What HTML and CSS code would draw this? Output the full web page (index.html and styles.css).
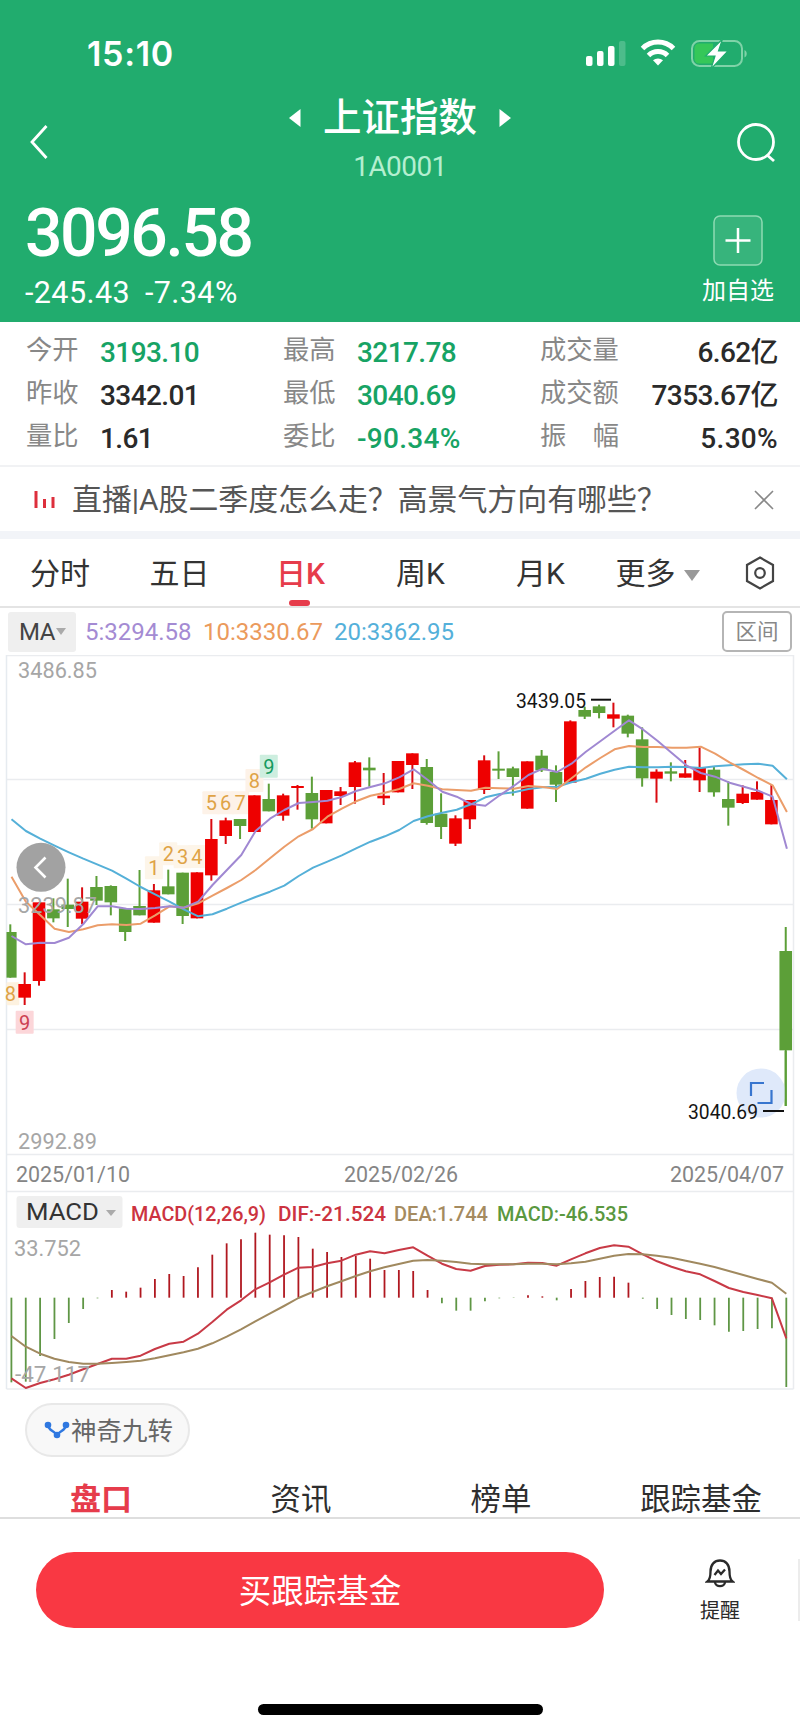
FILE: index.html
```html
<!DOCTYPE html>
<html lang="zh-CN">
<head>
    <meta charset="UTF-8">
    <meta name="viewport" content="width=device-width, initial-scale=1.0">
    <title>上证指数</title>
    <link rel="stylesheet" href="styles.css">
</head>
<body>
    <div class="app">
        <header class="header">
            <div class="status-bar">
                <span class="time">15:10</span>
                <svg class="status-icons" width="164" height="30" viewBox="0 0 164 30">
                    <rect x="1" y="17" width="6.5" height="10" rx="2" fill="#fff"/>
                    <rect x="12" y="12" width="6.5" height="15" rx="2" fill="#fff"/>
                    <rect x="23" y="7" width="6.5" height="20" rx="2" fill="#fff"/>
                    <rect x="34" y="2" width="6.5" height="25" rx="2" fill="#fff" opacity=".2"/>
                    <g fill="none" stroke="#fff" stroke-width="5">
                        <path d="M57.500 9.500a22 22 0 0 1 31 0"/>
                        <path d="M63.500 16.500a13.500 13.500 0 0 1 19 0"/>
                    </g>
                    <path d="M73 26.500l-5-5.200a7.500 7.500 0 0 1 10 0z" fill="#fff"/>
                    <rect x="107" y="2" width="50" height="25" rx="7.500" fill="none" stroke="#7fd3a8" stroke-width="2"/>
                    <path d="M114 4.500h14v20h-14a4.500 4.500 0 0 1-4.500-4.500V9a4.500 4.500 0 0 1 4.500-4.500z" fill="#35c759"/>
                    <path d="M159.500 11c3 1.500 3 6 0 7.500z" fill="#7fd3a8"/>
                    <path d="M137.500 0l-17 17h9.500l-4 13 17-18h-9.500z" fill="#fff" stroke="#21ac6e" stroke-width="1.200"/>
                </svg>
            </div>

            <div class="title-bar">
                <svg class="back" width="20" height="36" viewBox="0 0 20 36"><path d="M17.500 2L3 18l14.500 16"/></svg>
                <div class="title">
                    <div class="title-name">
                        <svg width="14" height="20" viewBox="0 0 14 20"><path d="M12.500 1v18L1 10z"/></svg>
                        <h1>上证指数</h1>
                        <svg width="14" height="20" viewBox="0 0 14 20"><path d="M1.500 1v18L13 10z"/></svg>
                    </div>
                    <p class="code">1A0001</p>
                </div>
                <svg class="search" width="42" height="44" viewBox="0 0 42 44"><circle cx="20" cy="20" r="17.500"/><path d="M31 33l7 6"/></svg>
            </div>

            <div class="quote">
                <div>
                    <div class="price">3096.58</div>
                    <div class="change"><span>-245.43</span><span>-7.34%</span></div>
                </div>
                <div class="add">
                    <svg width="50" height="51" viewBox="0 0 50 51">
                        <rect x="1" y="1" width="48" height="49" rx="6" fill="#fff" fill-opacity=".1" stroke="#8edab3" stroke-width="1.500"/>
                        <path d="M25 13v25M12.500 25.500h25" stroke="#fff" stroke-width="2.500"/>
                    </svg>
                    <span>加自选</span>
                </div>
            </div>
        </header>

        <section class="stats">
            <span class="label">今开</span><span class="value green">3193.10</span>
            <span class="label">最高</span><span class="value green">3217.78</span>
            <span class="label">成交量</span><span class="value right">6.62亿</span>
            <span class="label">昨收</span><span class="value">3342.01</span>
            <span class="label">最低</span><span class="value green">3040.69</span>
            <span class="label">成交额</span><span class="value right">7353.67亿</span>
            <span class="label">量比</span><span class="value">1.61</span>
            <span class="label">委比</span><span class="value green percent">-90.34%</span>
            <span class="label wide"><i>振</i><i>幅</i></span><span class="value right percent">5.30%</span>
        </section>

        <section class="news">
            <svg width="22" height="18" viewBox="0 0 22 18"><path d="M2 0v17M10.500 8v9M19 6v11" stroke="#dd2f3c" stroke-width="3"/></svg>
            <p>直播|A股二季度怎么走？高景气方向有哪些？</p>
            <svg class="close" width="20" height="20" viewBox="0 0 20 20"><path d="M1 1l18 18M19 1L1 19" stroke="#888" stroke-width="1.600"/></svg>
        </section>

        <nav class="periods">
            <span>分时</span>
            <span>五日</span>
            <span class="active">日K</span>
            <span>周K</span>
            <span>月K</span>
            <span class="more">更多 <svg width="16" height="11" viewBox="0 0 16 11"><path d="M0 0h16L8 11z" fill="#999"/></svg></span>
            <svg class="setting" width="30" height="34" viewBox="0 0 30 34">
                <path d="M15 1.500L28 9v16L15 32.500 2 25V9z"/><circle cx="15" cy="17" r="4.800"/>
            </svg>
        </nav>

        <section class="ma-bar">
            <span class="ma-select">MA<svg width="10" height="7" viewBox="0 0 10 7"><path d="M0 0h10L5 7z" fill="#aaa"/></svg></span>
            <span class="ma5">5:3294.58</span>
            <span class="ma10">10:3330.67</span>
            <span class="ma20">20:3362.95</span>
            <span class="range">区间</span>
        </section>

        <svg class="chart" id="chart" width="800" height="736" viewBox="0 0 800 736"></svg>

        <div class="tools">
            <span class="pill">
                <svg width="26" height="18" viewBox="0 0 26 18">
                    <path d="M4 4c1 6 5 5 9 10 4-5 8-4 9-10" fill="none" stroke="#2f78e0" stroke-width="2.500"/>
                    <circle cx="4" cy="4" r="3.300"/><circle cx="22" cy="4" r="3.300"/><circle cx="13" cy="14" r="3.300"/>
                </svg><b>神奇九转</b>
            </span>
        </div>

        <nav class="tabs">
            <span class="active">盘口</span>
            <span>资讯</span>
            <span>榜单</span>
            <span>跟踪基金</span>
        </nav>

        <footer class="footer">
            <div class="actions">
                <button class="buy">买跟踪基金</button>
                <div class="remind">
                    <svg width="30" height="30" viewBox="0 0 30 30">
                        <path d="M2.500 23.500c2.500-2 3-4 3-10C5.500 6.500 9.500 2.500 15 2.500s9.500 4 9.500 11c0 6 .5 8 3 10z"/>
                        <path d="M10 24c0 5.500 10 5.500 10 0M9.500 17l3.500-4.500 3 3.500 4-4.500"/>
                    </svg>
                    <span>提醒</span>
                </div>
                <i class="edge"></i>
            </div>
            <div class="home-bar"></div>
        </footer>
    </div>
    <script src="script.js"></script>
</body>
</html>
```
FILE: styles.css
```css
* {
    margin: 0;
    padding: 0;
    box-sizing: border-box;
}

body {
    width: 800px;
    background: #fff;
    color: #2a2a2a;
    font-family: Roboto, "Noto Sans CJK SC", sans-serif;
}

.app {
    width: 800px;
    height: 1731px;
    overflow: hidden;
}

/* Header */
.header {
    height: 322px;
    padding-top: 34px;
    background: #21ac6e;
    color: #fff;
}

.status-bar {
    display: flex;
    justify-content: space-between;
    align-items: center;
    height: 40px;
    padding: 0 51px 0 87px;
}

.time {
    font-family: Inter, sans-serif;
    font-size: 34px;
    font-weight: 600;
    line-height: 38px;
    letter-spacing: 0.7px;
}

.title-bar {
    display: flex;
    justify-content: space-between;
    height: 118px;
    padding: 19px 22px 0 29px;
}

.title-bar svg {
    fill: none;
    stroke: #fff;
    stroke-width: 2.8;
}

.back {
    margin-top: 31px;
}

.search {
    margin-top: 29px;
}

.title {
    width: 300px;
    margin-left: 15px;
    text-align: center;
}

.title-name {
    display: flex;
    justify-content: center;
    align-items: center;
    gap: 21px;
    height: 50px;
}

.title-name svg {
    fill: #fff;
    stroke: none;
}

.title-name h1 {
    font-size: 38.5px;
    font-weight: 500;
    line-height: 50px;
}

.code {
    margin-top: 8px;
    color: #b4efd0;
    font-size: 28px;
    line-height: 32px;
    letter-spacing: -0.6px;
}

.quote {
    display: flex;
    justify-content: space-between;
    padding: 6px 26px 0 25px;
}

.price {
    height: 70px;
    font-size: 66px;
    font-weight: 500;
    line-height: 71px;
    letter-spacing: -2.4px;
}

.change {
    display: flex;
    gap: 15px;
    margin-top: 6px;
    font-size: 30.5px;
    line-height: 38px;
    letter-spacing: 0.4px;
}

.add {
    display: flex;
    flex-direction: column;
    align-items: center;
    padding-top: 17px;
    font-size: 24px;
}

.add span {
    margin-top: 7px;
    line-height: 36px;
}

/* Quote numbers */
.stats {
    display: grid;
    grid-template-columns: 74px 183px 74px 183px 79px 1fr;
    grid-auto-rows: 43px;
    height: 145px;
    padding: 8px 22px 0 26px;
    border-bottom: 2px solid #f1f2f4;
}

.label {
    color: #888;
    font-size: 26.3px;
    line-height: 41px;
    white-space: nowrap;
}

.wide {
    display: flex;
    justify-content: space-between;
}

.label i {
    font-style: normal;
}

.value {
    font-size: 28px;
    font-weight: 500;
    line-height: 45px;
    letter-spacing: -0.6px;
    white-space: nowrap;
}

.percent {
    letter-spacing: 0.3px;
}

.green {
    color: #17a364;
}

.right {
    text-align: right;
}

/* News line */
.news {
    display: flex;
    align-items: center;
    height: 72px;
    padding: 2px 26px 0 34px;
    color: #555;
    border-bottom: 8px solid #f2f4f8;
}

.news p {
    flex: 1;
    margin-left: 16px;
    font-size: 29.9px;
    line-height: 44px;
}

/* Period tabs */
.periods {
    display: grid;
    grid-template-columns: 120px 119px 123px 117px 123px 112px 1fr;
    align-items: center;
    height: 69px;
    border-bottom: 2px solid #e4e4e4;
    color: #333;
    font-size: 30px;
    text-align: center;
}

.periods span {
    position: relative;
    height: 67px;
    line-height: 70px;
}

.periods .active {
    color: #e63c4b;
    font-weight: 500;
}

.periods .active::after {
    content: "";
    position: absolute;
    left: 50px;
    bottom: 0;
    width: 21px;
    height: 6px;
    border-radius: 3px;
    background: #e63c4b;
}

.periods .more {
    text-align: right;
    padding-right: 14px;
    white-space: nowrap;
}

.more svg {
    margin: 0 0 3px 1px;
}

.setting {
    margin-left: 31px;
    fill: none;
    stroke: #444;
    stroke-width: 2.2;
}

/* MA row */
.ma-bar {
    display: flex;
    align-items: center;
    height: 47px;
    padding: 0 8px;
    font-size: 24px;
}

.ma-select {
    display: flex;
    align-items: center;
    width: 68px;
    height: 40px;
    padding-left: 11px;
    border-radius: 3px;
    background: #efefef;
    color: #444;
    letter-spacing: -0.5px;
}

.ma-select svg {
    margin-left: 1px;
}

.ma5 {
    width: 118px;
    margin-left: 9px;
    color: #a48bd3;
}

.ma10 {
    width: 131px;
    color: #eb9a5c;
}

.ma20 {
    color: #54b0da;
}

.range {
    width: 70px;
    height: 41px;
    margin-left: auto;
    border: 2px solid #b5b5b5;
    border-radius: 5px;
    color: #888;
    font-size: 21.5px;
    line-height: 37px;
    text-align: center;
}

/* Chart */
.chart {
    display: block;
}

.chart text {
    font-family: Roboto, sans-serif;
}

.line {
    fill: none;
    stroke-width: 2;
    stroke-linejoin: round;
}

/* Tools and tabs under the chart */
.tools {
    display: flex;
    height: 85px;
    padding: 12px 25px 0;
}

.pill {
    display: flex;
    align-items: center;
    width: 165px;
    height: 54px;
    padding-left: 17px;
    border: 2px solid #e8e8e8;
    border-radius: 27px;
    background: #f8f8f8;
    color: #666;
    font-size: 25.5px;
    white-space: nowrap;
}

.pill svg {
    margin-right: 1px;
    fill: #2f78e0;
}

.pill b {
    padding-bottom: 4px;
    font-weight: 400;
}

.tabs {
    display: grid;
    grid-template-columns: repeat(4, 200px);
    height: 43px;
    padding-left: 1px;
    border-bottom: 2px solid #dedede;
    color: #2e2e2e;
    font-size: 30.4px;
    line-height: 47px;
    text-align: center;
}

.tabs .active {
    color: #e63c4b;
    font-weight: 700;
    font-size: 31px;
}

/* Bottom bar */
.footer {
    padding-top: 33px;
}

.actions {
    display: flex;
    height: 152px;
    padding-left: 36px;
}

.buy {
    width: 568px;
    height: 76px;
    padding-bottom: 4px;
    border: none;
    border-radius: 38px;
    background: #f93843;
    color: #fff;
    font-family: inherit;
    font-size: 32.5px;
}

.remind {
    display: flex;
    flex-direction: column;
    align-items: center;
    margin-left: 96px;
    padding-top: 6px;
    font-size: 20px;
    line-height: 30px;
}

.remind svg {
    margin-bottom: 8px;
    fill: none;
    stroke: #2a2a2a;
    stroke-width: 2.3;
}

.edge {
    width: 2px;
    height: 62px;
    margin: 7px 0 0 auto;
    background: #ececec;
}

.home-bar {
    width: 285px;
    height: 11px;
    margin-left: 258px;
    border-radius: 6px;
    background: #000;
}
```
FILE: script.js
```js
const chart = document.getElementById('chart');
const RED = '#ee0000';
const GREEN = '#5c9f38';

// [up, high, open/close top, open/close bottom, low], in thirds of a pixel
const candles = [
    [0, 853, 876, 1013, 1013], [1, 997, 1032, 1073, 1095], [1, 787, 787, 1023, 1037], [0, 775, 808, 835, 847],
    [0, 716, 794, 807, 861], [1, 742, 785, 836, 852], [0, 708, 741, 782, 795], [0, 736, 738, 787, 826],
    [0, 805, 805, 876, 903], [0, 690, 798, 826, 826], [1, 732, 751, 848, 848], [0, 689, 739, 763, 763],
    [0, 698, 698, 828, 852], [1, 697, 697, 835, 835], [1, 537, 597, 706, 722], [1, 533, 541, 588, 612],
    [0, 537, 537, 558, 597], [1, 466, 466, 576, 576], [0, 431, 477, 514, 514], [1, 461, 466, 527, 542],
    [1, 435, 438, 444, 509], [0, 410, 459, 538, 566], [1, 450, 450, 550, 550], [1, 441, 454, 468, 495],
    [1, 363, 367, 441, 491], [0, 352, 383, 391, 440], [1, 399, 467, 475, 495], [1, 363, 363, 457, 457],
    [1, 340, 340, 375, 447], [0, 357, 381, 549, 554], [0, 460, 521, 561, 597], [1, 526, 535, 611, 618],
    [1, 480, 480, 538, 567], [1, 346, 361, 450, 462], [0, 334, 386, 392, 417], [0, 380, 385, 411, 467],
    [1, 364, 364, 506, 506], [0, 330, 347, 391, 396], [0, 376, 396, 434, 486], [1, 241, 244, 428, 428],
    [0, 200, 210, 230, 237], [0, 194, 199, 219, 235], [1, 188, 223, 236, 262], [0, 224, 227, 281, 292],
    [0, 262, 298, 415, 440], [1, 388, 395, 416, 488], [0, 367, 394, 401, 424], [1, 360, 400, 413, 413],
    [1, 322, 384, 421, 456], [0, 380, 389, 457, 470], [0, 424, 477, 503, 557], [1, 436, 461, 489, 492],
    [1, 424, 456, 479, 479], [1, 435, 480, 553, 553], [0, 861, 933, 1231, 1398]
];

const ma5 = [888, 913, 908, 909, 893, 852, 799, 799, 806, 807, 804, 799, 803, 785, 735, 690, 645, 573, 536, 510, 489, 486, 482, 471, 453, 441, 430, 412, 388, 420, 455, 470, 492, 497, 466, 437, 405, 386, 396, 371, 335, 304, 272, 241, 269, 303, 340, 376, 399, 410, 428, 440, 452, 470, 626];
const ma10 = [710, 785, 825, 866, 876, 868, 856, 853, 855, 851, 826, 799, 803, 790, 767, 744, 720, 690, 655, 620, 589, 567, 530, 506, 484, 467, 458, 447, 430, 437, 448, 450, 452, 443, 445, 446, 438, 441, 447, 415, 382, 354, 328, 318, 321, 321, 323, 323, 320, 341, 367, 390, 414, 436, 516];
const ma20 = [538, 573, 596, 617, 637, 656, 674, 692, 716, 741, 763, 785, 808, 829, 823, 806, 788, 771, 755, 737, 708, 683, 665, 646, 625, 605, 589, 570, 543, 529, 518, 509, 493, 472, 462, 457, 447, 442, 440, 427, 416, 401, 389, 380, 382, 382, 380, 381, 384, 379, 376, 373, 371, 377, 418];

const macd = [787, 785, 708, 657, 609, 567, 535, 510, 515, 503, 477, 462, 468, 442, 404, 370, 358, 338, 344, 346, 351, 386, 396, 411, 408, 416, 450, 450, 453, 510, 550, 572, 572, 544, 535, 534, 526, 529, 541, 507, 483, 471, 470, 488, 536, 567, 585, 597, 600, 616, 635, 633, 627, 625, 801];
const dif = [775, 804, 789, 778, 764, 748, 732, 716, 716, 707, 687, 671, 665, 641, 606, 569, 541, 508, 487, 464, 443, 441, 430, 422, 404, 394, 400, 390, 382, 407, 431, 447, 452, 438, 434, 433, 428, 429, 437, 418, 400, 384, 376, 380, 403, 424, 440, 454, 463, 483, 504, 516, 525, 535, 655];
const dea = [648, 680, 701, 716, 726, 731, 731, 729, 726, 722, 715, 706, 697, 686, 670, 650, 628, 604, 581, 558, 534, 516, 499, 484, 468, 454, 442, 432, 422, 420, 422, 426, 431, 433, 433, 433, 431, 431, 433, 430, 425, 416, 407, 402, 403, 407, 413, 422, 431, 441, 453, 465, 477, 488, 521];

// [candle, digit, y, text colour, background]
const marks = [
    [0, 8, 1063, '#dfa346', '#fdf2e0'], [1, 9, 1148, '#cc4052', '#fcd6d9'],
    [10, 1, 685, '#dfa346', '#fdf5e9'], [11, 2, 643, '#dfa346', '#fdf5e9'],
    [12, 3, 652, '#dfa346', '#fdf5e9'], [13, 4, 651, '#dfa346', '#fdf5e9'],
    [14, 5, 490, '#dfa346', '#fdf2e8'], [15, 6, 490, '#dfa346', '#fdf2e8'],
    [16, 7, 490, '#dfa346', '#fdf2e8'], [17, 8, 423, '#dfa346', '#fdf2e8'],
    [18, 9, 380, '#159a60', '#cdeedf']
];

const kx = i => 10.3 + i * 14.36;
const mx = i => 11.4 + i * 14.35;
const ky = v => v / 3 - 15;
const my = v => v / 3 + 465;

function line(x1, y1, x2, y2, color, width) {
    return `<line x1="${x1}" y1="${y1}" x2="${x2}" y2="${y2}" stroke="${color}" stroke-width="${width}"/>`;
}

function curve(data, x, y, color) {
    const points = data.map((v, i) => `${x(i).toFixed(1)},${y(v).toFixed(1)}`).join(' ');
    return `<polyline class="line" points="${points}" stroke="${color}"/>`;
}

function label(x, y, width, str, color, size, weight) {
    return `<text x="${x}" y="${y}" textLength="${width}" lengthAdjust="spacingAndGlyphs" fill="${color}" font-size="${size}" font-weight="${weight || 400}">${str}</text>`;
}

let out = '';

// grid
[0.5, 124.5, 249.5, 374.5, 499.5, 536.5, 734].forEach(y => out += line(6.5, y, 793.5, y, '#eaecef', 1.5));
out += line(6.5, 0, 6.5, 734, '#e6ebf0', 1.5) + line(793.5, 0, 793.5, 734, '#eaecef', 1.5);

// nine-turn backgrounds first, so they never cover a neighbour's digit
marks.forEach(([i, n, v, color, bg]) => {
    const x = kx(i);
    const left = Math.max(x - 9, 6.5);
    out += `<rect x="${left}" y="${ky(v) - 12}" width="${x + 9 - left}" height="23" rx="1" fill="${bg}"/>`;
});
marks.forEach(([i, n, v, color]) => {
    out += `<text x="${kx(i)}" y="${ky(v) + 7}" text-anchor="middle" font-size="20" fill="${color}">${n}</text>`;
});

// candles
candles.forEach(([up, high, top, bottom, low], i) => {
    const color = up ? RED : GREEN;
    const left = Math.max(kx(i) - 6.3, 6.5);
    out += line(kx(i), ky(high), kx(i), ky(low), up ? '#d90a10' : color, 2);
    out += `<rect x="${left}" y="${ky(top)}" width="${kx(i) + 6.3 - left}" height="${(bottom - top) / 3}" fill="${color}"/>`;
});

out += curve(ma20, i => kx(i) + 1.2, ky, '#55b0d8');
out += curve(ma10, i => kx(i) + 1.2, ky, '#eb9d6a');
out += curve(ma5, i => kx(i) + 1.2, ky, '#a088d2');

// price scale
out += label(18, 23, 79, '3486.85', '#a6a6a6', 22);
out += label(18, 258, 79, '3239.87', '#a6a6a6', 22);
out += label(18, 494, 79, '2992.89', '#a6a6a6', 22);

// previous page button
out += '<circle cx="41" cy="212.300" r="24.500" fill="#a2a2a2"/><path d="M45.500 202.500L35.500 212.500l10 10" fill="none" stroke="#fff" stroke-width="2.600"/>';

// full screen button
out += '<circle cx="761" cy="438" r="24.500" fill="#dbe7f9" fill-opacity=".9"/><path d="M764 428h-13v13M771.500 435v13h-14" fill="none" stroke="#3876cf" stroke-width="2.200"/>';
out += line(785.7, 396, 785.7, 451, GREEN, 2);

// high and low
out += label(516, 53, 70, '3439.05', '#151515', 20.5) + line(591, 44.7, 611, 44.7, '#111', 2);
out += label(688, 464, 70, '3040.69', '#151515', 20.5) + line(763, 456, 784, 456, '#111', 2);

// dates
out += label(16, 527, 114, '2025/01/10', '#858585', 22);
out += label(344, 527, 114, '2025/02/26', '#858585', 22);
out += label(670, 527, 114, '2025/04/07', '#858585', 22);

// MACD
out += '<rect x="16.500" y="541" width="106" height="32" rx="3" fill="#efefef"/><path d="M106 555h10l-5 6z" fill="#aaa"/>';
out += label(26, 564.5, 73, 'MACD', '#333', 24);
out += label(131, 565.5, 135, 'MACD(12,26,9)', '#cc3340', 20.5, 500);
out += label(278, 565.5, 108, 'DIF:-21.524', '#cc3340', 20.5, 500);
out += label(394, 565.5, 94, 'DEA:1.744', '#a58b60', 20.5, 500);
out += label(497, 565.5, 131, 'MACD:-46.535', '#5a983f', 20.5, 500);
out += label(14, 601, 67, '33.752', '#a6a6a6', 22);

macd.forEach((v, i) => out += line(mx(i), my(533), mx(i), my(v), v < 533 ? '#b01820' : '#5f9645', 1.8));
out += curve(dif, mx, my, '#c83a46');
out += curve(dea, mx, my, '#a0895f');
out += label(15, 727, 75, '-47.117', '#a6a6a6', 22);

chart.innerHTML = out;
```
